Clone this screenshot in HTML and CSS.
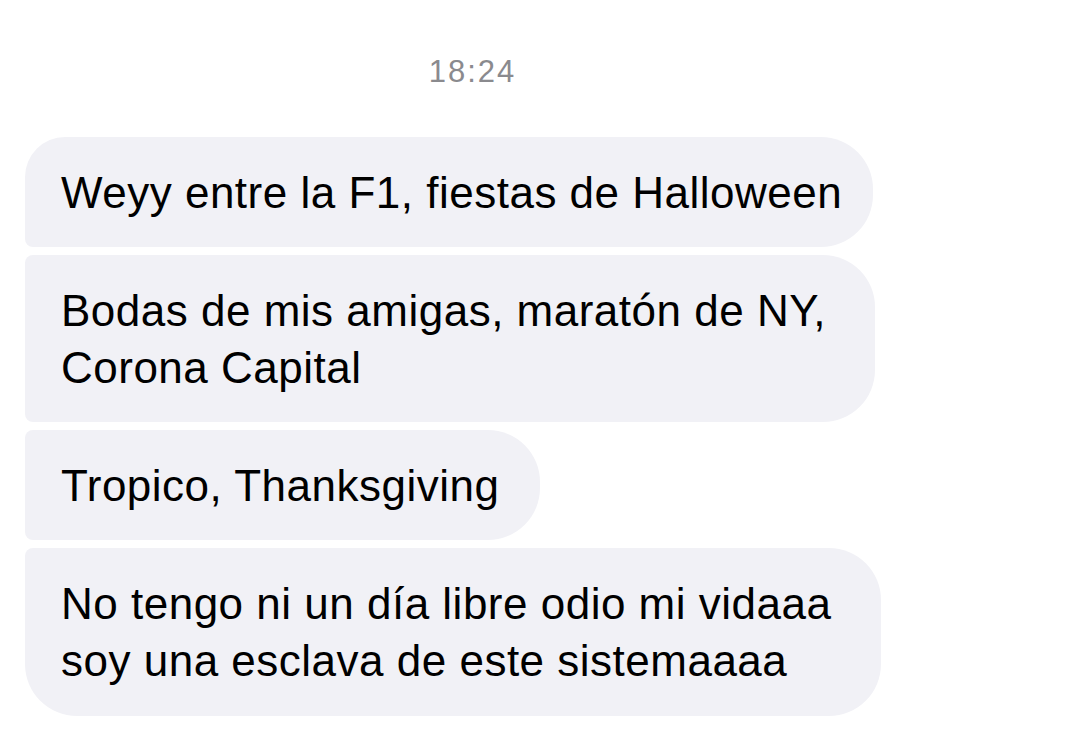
FILE: index.html
```html
<!DOCTYPE html>
<html lang="es">
<head>
<meta charset="utf-8">
<title>Mensajes</title>
<link rel="stylesheet" href="styles.css">
</head>
<body>
<main class="thread">
  <div class="time">18:24</div>
  <div class="group">
    <div class="bubble first">Weyy entre la F1, fiestas de Halloween</div>
    <div class="bubble multi">Bodas de mis amigas, maratón de NY,<br>Corona Capital</div>
    <div class="bubble short">Tropico, Thanksgiving</div>
    <div class="bubble last multi-wide">No tengo ni un día libre odio mi vidaaa<br>soy una esclava de este sistemaaaa</div>
  </div>
</main>
</body>
</html>
```

FILE: styles.css
```css
* { box-sizing: border-box; }
html, body { margin: 0; padding: 0; background: #ffffff; }
body { font-family: "Liberation Sans", Arial, sans-serif; color: #000; }
.thread {
  width: 1080px;
  height: 740px;
  padding: 52px 0 0 25px;
  overflow: hidden;
}
.time {
  width: 895px;
  text-align: center;
  color: #8a8a8e;
  font-size: 31px;
  letter-spacing: 2px;
  line-height: 40px;
  margin-bottom: 45px;
}
.group {
  display: flex;
  flex-direction: column;
  align-items: flex-start;
  gap: 8px;
}
.bubble {
  background: #f1f1f6;
  font-size: 44px;
  letter-spacing: 0.5px;
  line-height: 57px;
  padding: 27px 37px 26px 36px;
  border-radius: 8px 52px 52px 8px;
  white-space: nowrap;
}
.bubble.first { border-top-left-radius: 40px; padding-right: 31px; }
.bubble.multi { padding-right: 49px; }
.bubble.short { padding-right: 40px; }
.bubble.multi-wide { padding-right: 50px; }
.bubble.last { border-bottom-left-radius: 52px; padding-bottom: 27px; }
```
